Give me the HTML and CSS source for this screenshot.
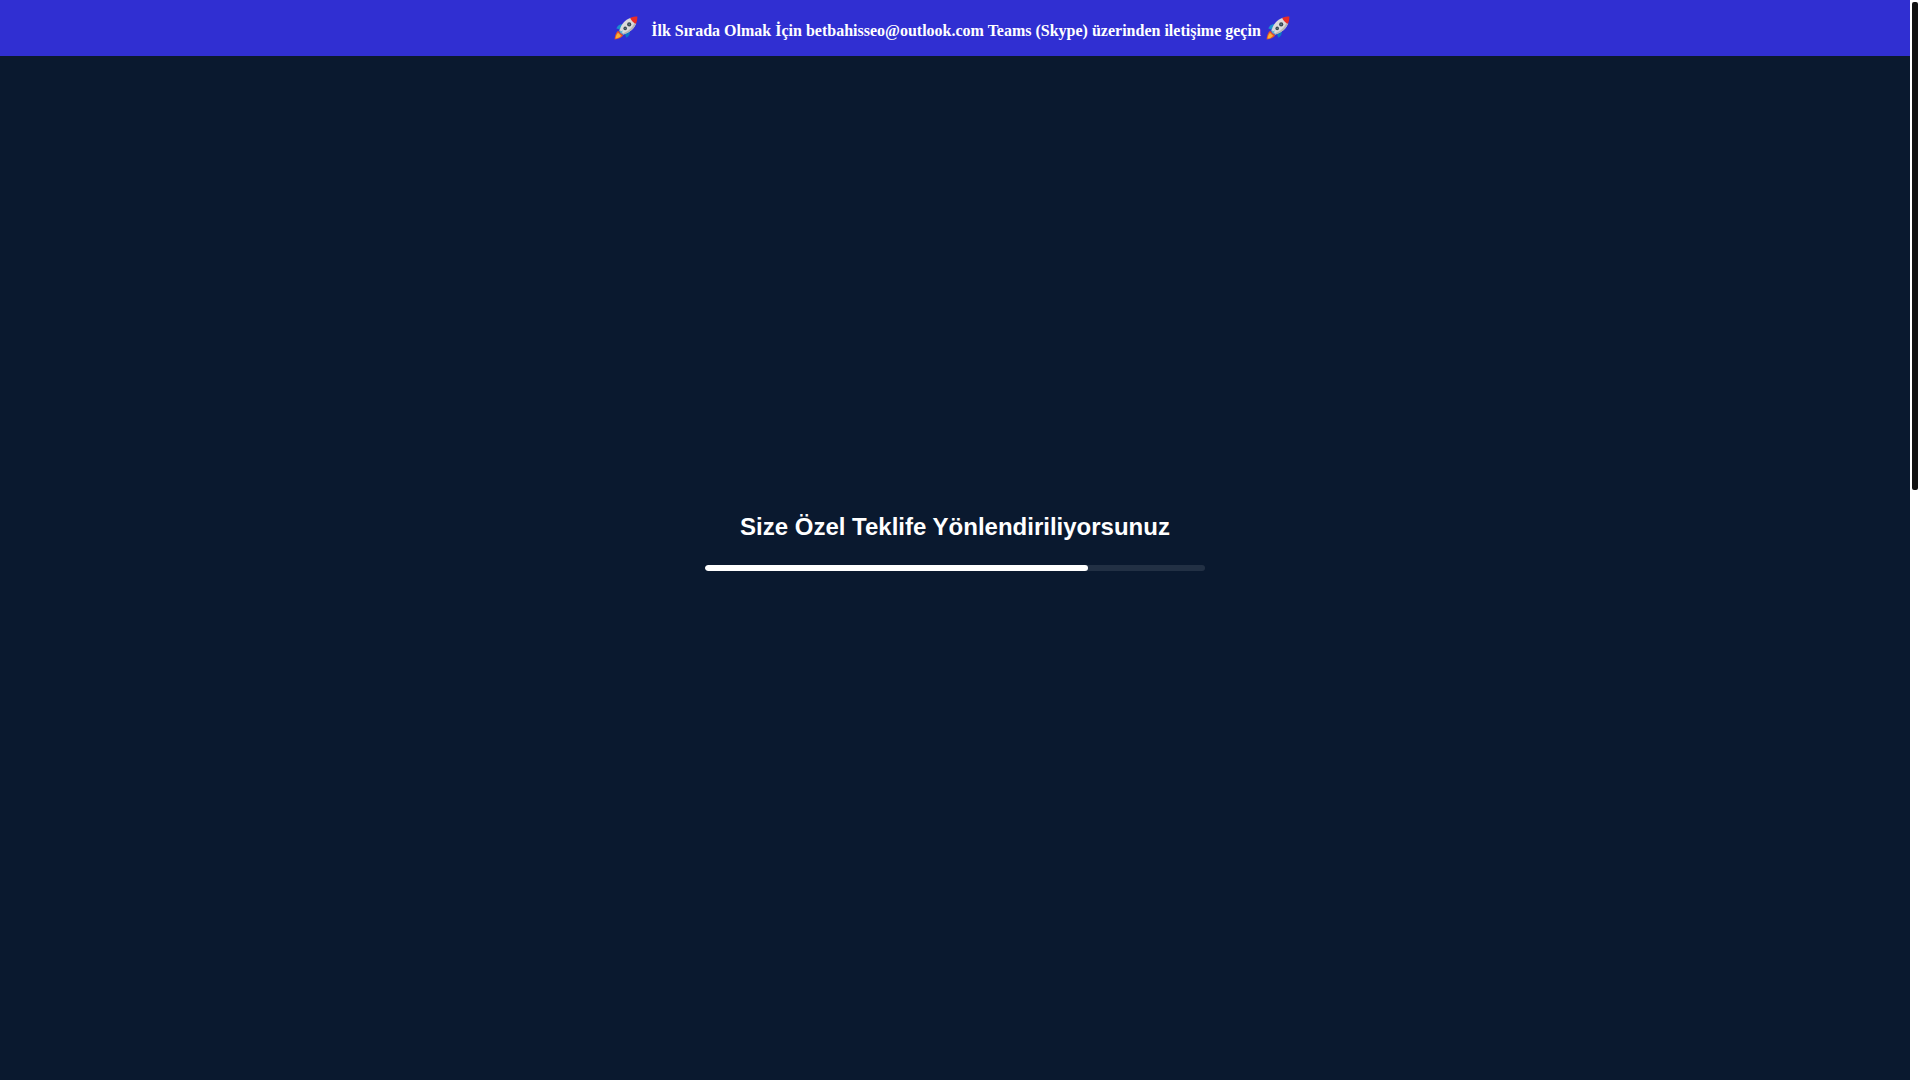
FILE: index.html
```html
<!DOCTYPE html>
<html lang="tr">
    <head>
        <meta charset="utf-8" />
        <meta name="viewport" content="width=device-width, initial-scale=1" />
        <title>Size Özel Teklife Yönlendiriliyorsunuz</title>
        <link rel="stylesheet" href="styles.css">
    </head>
    <body>
        <svg class="sprite" aria-hidden="true">
            <symbol id="rocket" viewBox="0 0 24 24">
                <path fill="#1a8fd0" d="M9.5 8.4 C6 7.6 3.4 9.4 2.4 12.6 L7 13.6Z"/>
                <path fill="#0c78c4" d="M15.6 14.5 C16.4 18 15 20.4 12.4 21.8 L10.4 17Z"/>
                <path fill="#e5532a" d="M4 14.8 L9.2 19.6 C7.6 22 4 23.2 .6 23.4 C.6 20.8 1.8 16.6 4 14.8Z"/>
                <path fill="#fbb034" d="M4 16.8 L7.2 19.8 C5.6 21.6 3.4 22.4 1.6 22.6 C1.6 20.8 2.6 18 4 16.8Z"/>
                <path fill="#82aec0" d="M4.8 13.8 L7.4 12.8 L11.2 16.6 L9.8 19 C7.6 18.4 5.4 16.4 4.8 13.8Z"/>
                <path fill="#dadada" d="M5.8 14 C7 8.4 11.6 3 17 1.8 L22.2 7 C20.6 12.6 15 17 10 18.2Z"/>
                <path fill="#b4b4b4" d="M22.2 7 C20.6 12.6 15 17 10 18.2 L9 17.2 C14 15.8 19 11.6 21 5.8Z"/>
                <path fill="#e92c27" d="M16.2 2 C18.4 1 21 .6 23.4 .6 C23.4 3 23 5.6 22 7.8 C19.6 7 17 4.4 16.2 2Z"/>
                <circle cx="15.2" cy="8.4" r="2.1" fill="#37474f"/>
                <circle cx="15.2" cy="8.4" r=".8" fill="#607d8b"/>
                <circle cx="11.2" cy="12.4" r="1.8" fill="#37474f"/>
                <circle cx="11.2" cy="12.4" r=".7" fill="#607d8b"/>
                <path fill="#29b6e6" d="M9 14.4 C8.2 15.6 6.8 17 5.6 17.6 C6 16.4 7.2 15 9 14.4Z"/>
            </symbol>
        </svg>
        <div class="page">
            <header class="topbar">
                <svg class="rocket rocket--first" aria-hidden="true"><use href="#rocket"/></svg>
                <strong class="topbar__text">İlk Sırada Olmak İçin betbahisseo@outlook.com Teams (Skype) üzerinden iletişime geçin</strong>
                <svg class="rocket" aria-hidden="true"><use href="#rocket"/></svg>
            </header>
            <main class="redirect">
                <h1 class="redirect__title" id="redirect-title">Size Özel Teklife Yönlendiriliyorsunuz</h1>
                <progress class="redirect__bar" aria-labelledby="redirect-title" value="383" max="500"></progress>
            </main>
        </div>
        <div class="scroll">
            <div class="scroll__thumb"></div>
        </div>
    </body>
</html>
```
FILE: styles.css
```css
*,*::before,*::after{
    box-sizing: border-box;
}
body{
    margin:0;
    display:flex;
    min-height:100vh;
    background:#0a192f;
    color:white;
    text-rendering:optimizeSpeed;
}
.sprite{
    position:absolute;
    width:0;
    height:0;
}
.page{
    position:relative;
    flex:1;
    display:flex;
}
/* stays over the redirect screen */
.topbar{
    position:absolute;
    top:0;
    left:0;
    width:100%;
    height:56px;
    display:flex;
    align-items:center;
    justify-content:center;
    gap:5px;
    padding-right:6px;
    background:#302fd2;
    font-family:"Liberation Serif", "Times New Roman", serif;
}
.topbar__text{
    font-size:16px;
    line-height:20px;
    padding-top:5px;
}
.rocket{
    width:24px;
    height:24px;
}
.rocket--first{
    margin-right:8px;
}
.redirect{
    flex:1;
    display:flex;
    flex-direction:column;
    align-items:center;
    justify-content:center;
    gap:20px;
    font-family:"Liberation Sans", Arial, sans-serif;
}
.redirect__title{
    margin:0;
    font-size:24px;
    line-height:36px;
}
.redirect__bar{
    appearance:none;
    display:block;
    width:500px;
    max-width:90%;
    height:6px;
    border:0;
    border-radius:3px;
    overflow:hidden;
    background:rgba(255,255,255,0.1);
}
.redirect__bar::-webkit-progress-bar{
    background:transparent;
}
.redirect__bar::-webkit-progress-value{
    background:white;
    border-radius:3px;
}
.scroll{
    width:10px;
    padding:2px;
    background:white;
}
.scroll__thumb{
    height:488px;
    border-radius:2px;
    background:#111;
}
```
